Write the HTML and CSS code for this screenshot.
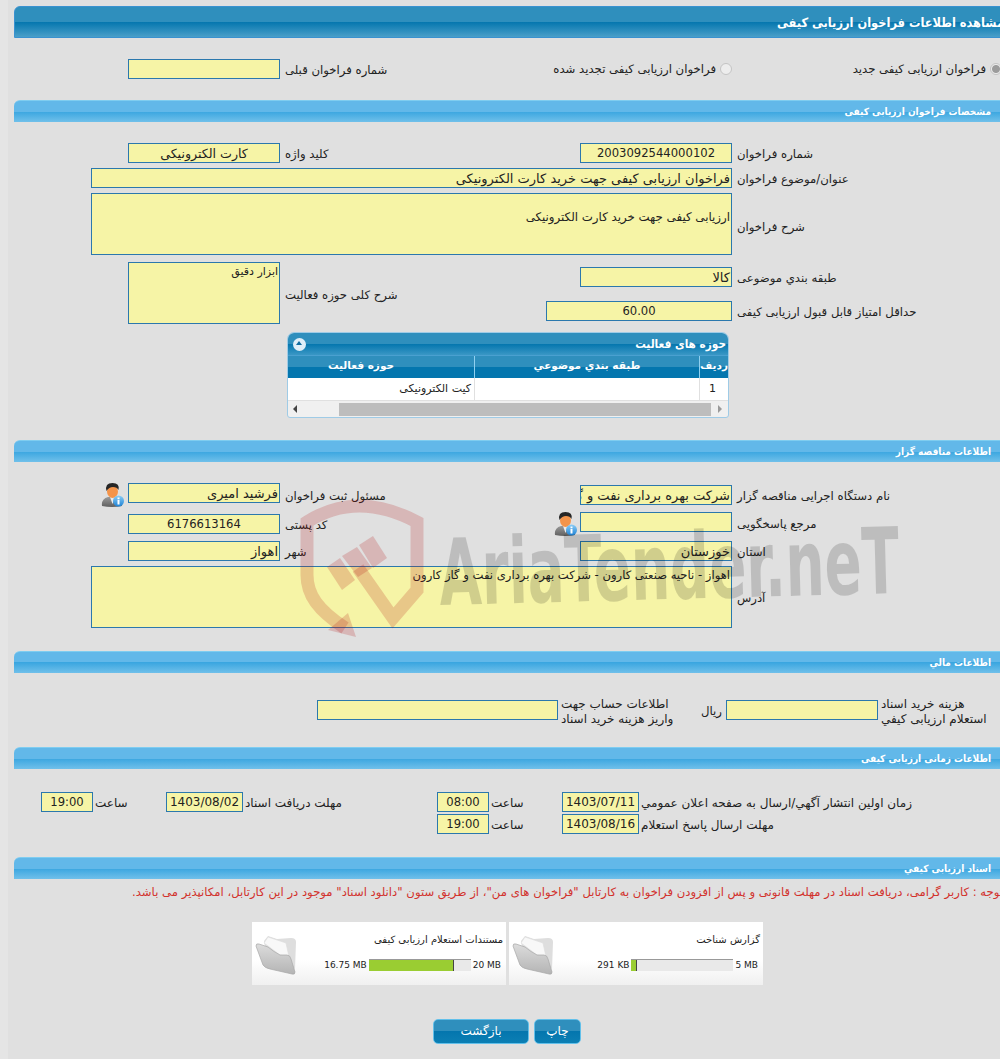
FILE: index.html
```html
<!DOCTYPE html>
<html lang="fa">
<head>
    <meta charset="UTF-8">
    <title>مشاهده اطلاعات فراخوان ارزیابی کیفی</title>
    <link rel="stylesheet" href="styles.css">
</head>
<body>
<div class="page">
    <!-- watermark -->
    <svg class="watermark" width="1000" height="700" viewBox="0 0 1000 700">
        <g fill="none" stroke="#b41414" stroke-width="13" opacity="0.2">
            <path d="M345 628 C318 610 307 595 307 575 V522 Q357 490 417 522 V590 L393 618 L358 568"/>
        </g>
        <g fill="#b41414" opacity="0.2">
            <path d="M327 567 L340 558 L355 580 L342 590 Z"/>
            <path d="M342 556 L357 547 L372 568 L358 577 Z"/>
            <path d="M359 545 L373 536 L387 558 L373 568 Z"/>
            <path d="M328 630 L348 613 L356 637 Z"/>
        </g>
        <text class="watermark-text" x="440" y="605" textLength="460" lengthAdjust="spacingAndGlyphs" transform="rotate(-1.5 440 605)">AriaTender.neT</text>
    </svg>

    <div class="main-bar"><span>مشاهده اطلاعات فراخوان ارزیابی کیفی</span></div>

    <div class="radio-row">
        <div class="field c-prev"></div>
        <div class="label">شماره فراخوان قبلی</div>
        <div class="radio-cell renewed">
            <span class="radio"></span>
            <span>فراخوان ارزیابی کیفی تجدید شده</span>
        </div>
        <div class="radio-cell fresh">
            <span class="radio checked"></span>
            <span>فراخوان ارزیابی کیفی جدید</span>
        </div>
    </div>

    <!-- مشخصات -->
    <div class="section-bar first-section">مشخصات فراخوان ارزیابی کیفی</div>
    <div class="form-grid rows-spec">
        <div class="field center keyword c-left">کارت الکترونیکی</div>
        <div class="label">کلید واژه</div>
        <div class="field center num c-right">2003092544000102</div>
        <div class="label">شماره فراخوان</div>

        <div class="field wide big-text">فراخوان ارزیابی کیفی جهت خرید کارت الکترونیکی</div>
        <div class="label">عنوان/موضوع فراخوان</div>

        <div class="field wide area desc">ارزیابی کیفی جهت خرید کارت الکترونیکی</div>
        <div class="label desc-label">شرح فراخوان</div>
    </div>

    <div class="activity">
        <div class="activity-left">
            <div class="field area activity-text">ابزار دقیق</div>
            <div class="label">شرح کلی حوزه فعالیت</div>
        </div>
        <div class="activity-right">
            <div class="activity-row">
                <div class="field big-text">کالا</div>
                <div class="label">طبقه بندي موضوعی</div>
            </div>
            <div class="activity-row score">
                <div class="field center num score-field">60.00</div>
                <div class="label">حداقل امتیاز قابل قبول ارزیابی کیفی</div>
            </div>
        </div>
    </div>

    <div class="grid-box">
        <div class="grid-title">
            <span>حوزه های فعالیت</span>
            <span class="collapse"></span>
        </div>
        <div class="grid-head">
            <div class="col-a">حوزه فعالیت</div>
            <div class="col-b">طبقه بندي موضوعي</div>
            <div class="col-c">ردیف</div>
        </div>
        <div class="grid-data">
            <div class="col-a">کیت الکترونیکی</div>
            <div class="col-b"></div>
            <div class="col-c">1</div>
        </div>
        <div class="grid-scroll">
            <span class="arrow left"></span>
            <span class="thumb"></span>
            <span class="arrow right"></span>
        </div>
    </div>

    <!-- مناقصه گزار -->
    <div class="section-bar org-section">اطلاعات مناقصه گزار</div>
    <div class="org">
        <div class="org-row">
            <svg class="person" width="24" height="24" viewBox="0 0 24 24"><use href="#person"/></svg>
            <div class="field big-text f-left">فرشید امیری</div>
            <div class="label l-left down2">مسئول ثبت فراخوان</div>
            <div class="field big-text f-right down2">شرکت بهره برداری نفت و گاز کارون</div>
            <div class="label down2">نام دستگاه اجرایی مناقصه گزار</div>
        </div>
        <div class="org-row">
            <div class="field center num f-left push down2">6176613164</div>
            <div class="label l-left person-gap down2">کد پستی</div>
            <svg class="person person-right" width="24" height="24" viewBox="0 0 24 24"><use href="#person"/></svg>
            <div class="field f-right"></div>
            <div class="label down1">مرجع پاسخگویی</div>
        </div>
        <div class="org-row third">
            <div class="field big-text f-left push">اهواز</div>
            <div class="label l-left">شهر</div>
            <div class="field big-text f-right">خوزستان</div>
            <div class="label">استان</div>
        </div>
        <div class="address-row">
            <div class="field area address">اهواز - ناحیه صنعتی کارون - شرکت بهره برداری نفت و گاز کارون</div>
            <div class="label">آدرس</div>
        </div>
    </div>

    <!-- مالی -->
    <div class="section-bar finance-section">اطلاعات مالي</div>
    <div class="finance">
        <div class="field account"></div>
        <div class="label two-line account-label">اطلاعات حساب جهت<br>واریز هزینه خرید اسناد</div>
        <div class="label rial">ریال</div>
        <div class="field cost"></div>
        <div class="label two-line">هزینه خرید اسناد<br>استعلام ارزیابی کیفي</div>
    </div>

    <!-- زمان -->
    <div class="section-bar time-section">اطلاعات زمانی ارزیابی کیفی</div>
    <div class="dates">
        <div class="field center num time">19:00</div>
        <div class="label l-hour">ساعت</div>
        <div class="field center date">1403/08/02</div>
        <div class="label l-d2">مهلت دریافت اسناد</div>
        <div class="field center num time">08:00</div>
        <div class="label l-hour">ساعت</div>
        <div class="field center date">1403/07/11</div>
        <div class="label">زمان اولین انتشار آگهي/ارسال به صفحه اعلان عمومي</div>
    </div>
    <div class="dates second-date">
        <div class="field center num time">19:00</div>
        <div class="label l-hour">ساعت</div>
        <div class="field center date">1403/08/16</div>
        <div class="label">مهلت ارسال پاسخ استعلام</div>
    </div>

    <!-- اسناد -->
    <div class="section-bar docs-section">اسناد ارزیابی کیفي</div>
    <div class="note">توجه : کاربر گرامی، دریافت اسناد در مهلت قانونی و پس از افزودن فراخوان به کارتابل "فراخوان های من"، از طریق ستون "دانلود اسناد" موجود در این کارتابل، امکانپذیر می باشد.</div>

    <div class="cards">
        <div class="card">
            <svg class="folder" width="44" height="40" viewBox="0 0 44 40"><use href="#folder"/></svg>
            <div class="card-body">
                <div class="card-title">مستندات استعلام ارزیابی کیفی</div>
                <div class="usage">
                    <span>16.75 MB</span>
                    <div class="bar"><div class="bar-fill" style="width: 83.75%"></div></div>
                    <span>20 MB</span>
                </div>
            </div>
        </div>
        <div class="card">
            <svg class="folder" width="44" height="40" viewBox="0 0 44 40"><use href="#folder"/></svg>
            <div class="card-body">
                <div class="card-title">گزارش شناخت</div>
                <div class="usage">
                    <span>291 KB</span>
                    <div class="bar"><div class="bar-fill" style="width: 5.7%"></div></div>
                    <span>5 MB</span>
                </div>
            </div>
        </div>
    </div>

    <div class="buttons">
        <button class="btn back">بازگشت</button>
        <button class="btn print">چاپ</button>
    </div>

    <!-- icons -->
    <svg width="0" height="0" class="defs">
        <defs>
            <linearGradient id="suit" x1="0" y1="0" x2="0" y2="1"><stop offset="0" stop-color="#9a9a9a"/><stop offset="1" stop-color="#5f5f5f"/></linearGradient>
            <linearGradient id="info" x1="0" y1="0" x2="0" y2="1"><stop offset="0" stop-color="#8ccdf5"/><stop offset="1" stop-color="#1e83d6"/></linearGradient>
            <linearGradient id="fold" x1="0" y1="0" x2="0" y2="1"><stop offset="0" stop-color="#dcdcdc"/><stop offset="1" stop-color="#b4b4b4"/></linearGradient>
            <symbol id="person" viewBox="0 0 24 24">
                <path d="M1 23 Q0 16 7 14 L16 14 Q21 16 21 23 Q11 25 1 23 Z" fill="url(#suit)"/>
                <path d="M9 14 L11.5 21 L14 14 Z" fill="#ececec"/>
                <ellipse cx="11.5" cy="8.5" rx="5.5" ry="6.5" fill="#f4944a"/>
                <path d="M5.5 8 Q3.5 0 11.5 0 Q19 0 17.5 7 Q16 4 12 4 Q8 4 5.5 8 Z" fill="#262626"/>
                <circle cx="17.5" cy="18" r="5.5" fill="url(#info)"/>
                <rect x="16.5" y="17" width="2" height="4.5" fill="#fff"/>
                <rect x="16.5" y="14.5" width="2" height="1.8" fill="#fff"/>
            </symbol>
            <symbol id="folder" viewBox="0 0 44 40">
                <path d="M9 6 L13 1 L22 4 L36 3 Q41 3 41 7 L40 34 L25 20 L10 12 Z" fill="#dedede"/>
                <path d="M9 8 L13 2 L31 8 L34 22 L25 20 Z" fill="#f8f8f8" stroke="#dcdcdc" stroke-width="0.6"/>
                <path d="M1 11 Q1 8 4 9 L13 12 Q19 17 25 20 L32 20 Q35 20 36 24 L40 37 Q40 40 37 39 L15 34 Q10 33 8 30 Z" fill="url(#fold)" stroke="#a8a8a8" stroke-width="0.7"/>
            </symbol>
        </defs>
    </svg>
</div>
</body>
</html>
```
FILE: styles.css
```css
* {
    box-sizing: border-box;
}

body {
    margin: 0;
    background-color: #e0e0e0;
    font-family: "DejaVu Sans", "Liberation Sans", sans-serif;
    font-size: 12px;
    color: #222;
}

.page {
    position: relative;
    width: 1000px;
    height: 1059px;
    padding-top: 6px;
    overflow: hidden;
    background: linear-gradient(90deg, #e5e5e5 8px, #e0e0e0 8px);
}

.defs {
    position: absolute;
}

/* watermark */
.watermark {
    position: absolute;
    top: 0;
    left: 0;
    z-index: 5;
    pointer-events: none;
}

.watermark-text {
    font-family: "DejaVu Sans Condensed", "DejaVu Sans", sans-serif;
    font-weight: bold;
    font-size: 92px;
    fill: #000;
    opacity: 0.15;
}

/* bars */
.main-bar {
    display: flex;
    align-items: center;
    justify-content: flex-end;
    height: 32px;
    margin-left: 14px;
    margin-right: -5px;
    border: 1px solid #3a92d0;
    border-radius: 6px 0 0 0;
    background: linear-gradient(#2f8fbd 0, #2f8fbd 50%, #0476ae 50%, #4a9fc9 100%);
    color: #fff;
    font-family: "DejaVu Sans Condensed", "DejaVu Sans", sans-serif;
    font-size: 12.7px;
    font-weight: bold;
}

.section-bar {
    height: 22px;
    line-height: 22px;
    margin-left: 14px;
    padding-right: 9px;
    border-radius: 6px 0 0 0;
    border-top: 1px solid #7fcdf0;
    background: linear-gradient(#62b8e9 0, #62b8e9 50%, #3aa6e0 50%, #70c0ea 100%);
    color: #fff;
    font-family: "DejaVu Sans Condensed", "DejaVu Sans", sans-serif;
    font-size: 10px;
    font-weight: bold;
    text-align: right;
}

.first-section { margin-top: 21px; }
.org-section { margin-top: 22px; }
.finance-section { margin-top: 23px; }
.time-section { margin-top: 17px; }
.docs-section { margin-top: 23px; }

/* fields */
.field {
    height: 20px;
    border: 1px solid #2b78ad;
    background-color: #f6f4a6;
    color: #222;
    direction: rtl;
    text-align: right;
    white-space: nowrap;
    overflow: hidden;
    padding: 0 1px;
    line-height: 18px;
    font-size: 12px;
}

.center { text-align: center; }
.num { font-size: 11.6px; }
.keyword { font-size: 12.6px; line-height: 19px; }
.big-text { font-size: 13px; line-height: 19px; }

.area {
    height: 62px;
    white-space: normal;
}

.label {
    height: 20px;
    padding-left: 5px;
    font-size: 11.7px;
    line-height: 22px;
    white-space: nowrap;
    direction: rtl;
    text-align: left;
    color: #222;
}

.form-grid {
    display: grid;
    grid-template-columns: 91px 37px 152px 300px 152px 1fr;
    row-gap: 5px;
    align-items: center;
}

.c-left { grid-column: 3; }
.c-right { grid-column: 5; }
.wide { grid-column: 2 / 6; }
.desc-label { margin-top: 4px; }

/* radio row */
.radio-row {
    display: grid;
    grid-template-columns: 128px 152px 271px 181px 268px;
    align-items: center;
    height: 20px;
    margin-top: 21px;
}

.c-prev { grid-column: 2; }

.radio-cell {
    display: flex;
    align-items: center;
    gap: 4px;
    direction: rtl;
    white-space: nowrap;
    font-size: 11.7px;
}

.renewed { justify-self: end; }
.fresh { margin-right: -2px; }

.radio {
    display: block;
    flex: none;
    width: 12px;
    height: 12px;
    margin-bottom: 1px;
    border: 1px solid #c4c4c4;
    border-radius: 50%;
    background-color: #ededed;
}

.radio.checked {
    background: radial-gradient(circle, #9c9c9c 0, #9c9c9c 3.5px, #ededed 4.5px);
}

.rows-spec {
    margin-top: 21px;
}

.desc {
    padding-top: 14px;
    line-height: 18px;
    font-size: 11.8px;
}

/* activity */
.activity {
    display: flex;
    margin-top: 7px;
    height: 62px;
}

.activity-left {
    display: flex;
    align-items: center;
    width: 580px;
    padding-left: 128px;
}

.activity-text {
    width: 152px;
    flex: none;
    padding-top: 1px;
    line-height: 16px;
    font-size: 11px;
}

.activity-left .label { margin-top: 2px; }

.activity-right { padding-top: 5px; }

.activity-row {
    display: flex;
    align-items: center;
}

.activity-row .field { width: 152px; }

.activity-row.score {
    margin-top: 14px;
    margin-left: -34px;
}

.activity-row .score-field { width: 186px; }

/* grid */
.grid-box {
    width: 442px;
    height: 86px;
    margin: 8px 0 0 287px;
    border: 1px solid #9fcbe6;
    border-radius: 7px 7px 3px 3px;
    overflow: hidden;
    background-color: #f0f0f0;
}

.grid-title {
    display: flex;
    justify-content: space-between;
    align-items: center;
    direction: rtl;
    height: 22px;
    padding: 0 2px 0 5px;
    background: linear-gradient(#2f8fbd 0, #2f8fbd 50%, #0476ae 50%, #3a97c5 100%);
    color: #fff;
    font-family: "DejaVu Sans Condensed", "DejaVu Sans", sans-serif;
    font-size: 11.7px;
    font-weight: bold;
}

.collapse {
    position: relative;
    width: 13px;
    height: 13px;
    border-radius: 50%;
    background-color: #dfeef8;
}

.collapse::after {
    content: "";
    position: absolute;
    top: 3px;
    left: 3px;
    border-left: 3.5px solid transparent;
    border-right: 3.5px solid transparent;
    border-bottom: 4px solid #0f6b9f;
}

.grid-head,
.grid-data {
    display: flex;
}

.col-a { width: 186px; flex: none; }
.col-b { width: 225px; flex: none; }
.col-c { flex: 1; }

.grid-head {
    height: 23px;
    border-top: 1px solid #4aa0d0;
    background: linear-gradient(#2f8fbd 0, #2f8fbd 50%, #0476ae 50%, #0476ae 100%);
    color: #fff;
    font-size: 10.5px;
    font-weight: bold;
    text-align: center;
    line-height: 18px;
}

.grid-head > div {
    border-left: 1px solid #8fd0f0;
    direction: rtl;
    white-space: nowrap;
}

.grid-head > div:first-child {
    border-left: 0;
    padding-right: 40px;
}

.grid-data {
    height: 23px;
    border-bottom: 1px solid #e0e0e0;
    background-color: #fff;
    font-size: 11px;
    line-height: 22px;
}

.grid-data > div {
    border-left: 1px solid #e0e0e0;
    direction: rtl;
    padding-right: 3px;
}

.grid-data > div:first-child { border-left: 0; }
.grid-data .col-c { text-align: center; }

.grid-scroll {
    position: relative;
    display: flex;
    align-items: center;
    height: 16px;
}

.thumb {
    width: 372px;
    height: 13px;
    margin-left: 51px;
    background-color: #bdbdbd;
}

.arrow {
    position: absolute;
    top: 4px;
    border-top: 4px solid transparent;
    border-bottom: 4px solid transparent;
}

.arrow.left {
    left: 5px;
    border-right: 4px solid #444;
}

.arrow.right {
    right: 6px;
    border-left: 4px solid #9a9a9a;
}

/* org */
.org {
    padding-top: 21px;
}

.org-row {
    display: flex;
    align-items: flex-start;
    height: 29px;
}

.org-row.third { height: 25px; }

.person {
    flex: none;
    margin: 0 3px 0 101px;
}

.push { margin-left: 128px; }
.f-left { width: 152px; flex: none; }
.f-right { width: 152px; flex: none; }
.l-left { width: 300px; flex: none; }
.org-row .person-gap { width: 274px; }
.person-right { margin: 0 2px 0 0; }
.down1 { margin-top: 1px; }
.down2 { margin-top: 2px; }

.address-row {
    display: flex;
    align-items: center;
    padding-left: 91px;
}

.address {
    width: 641px;
    flex: none;
    line-height: 17px;
    font-size: 11.6px;
}

/* finance */
.finance {
    display: flex;
    align-items: center;
    height: 40px;
    margin-top: 17px;
    padding-left: 317px;
}

.account { width: 241px; flex: none; }

.finance .two-line {
    height: auto;
    padding: 4px 0 0 3px;
    font-size: 12px;
    line-height: 15px;
}

.finance .account-label { width: 135px; flex: none; }

.finance .rial {
    width: 33px;
    flex: none;
    padding: 0 4px 0 0;
    text-align: right;
}

.cost { width: 152px; flex: none; }

/* dates */
.dates {
    display: flex;
    align-items: center;
    margin-top: 23px;
    padding-left: 41px;
}

.second-date {
    margin-top: 2px;
    padding-left: 437px;
}

.time { width: 52px; flex: none; }
.date { width: 77px; flex: none; }

.dates .label {
    padding-left: 2px;
    font-size: 12px;
}

.dates .l-hour { width: 73px; flex: none; }
.dates .l-d2 { width: 194px; flex: none; }

/* note */
.note {
    height: 16px;
    margin-top: 5px;
    margin-right: -3px;
    direction: rtl;
    color: #d2322d;
    font-size: 11.65px;
    line-height: 16px;
    white-space: nowrap;
}

/* cards */
.cards {
    display: flex;
    gap: 3px;
    margin: 22px 0 0 252px;
}

.card {
    display: flex;
    align-items: flex-start;
    width: 254px;
    height: 63px;
    padding: 0 3px;
    background: linear-gradient(#fff 0, #fff 60%, #f0f0f0 100%);
}

.card-body {
    flex: 1;
    padding-top: 10px;
    direction: rtl;
}

.folder { flex: none; margin-top: 13px; }

.card-title {
    font-size: 10px;
    line-height: 16px;
}

.usage {
    display: flex;
    direction: ltr;
    align-items: center;
    justify-content: flex-end;
    gap: 2px;
    margin-top: 11px;
    padding-right: 2px;
    font-size: 9px;
    white-space: nowrap;
}

.bar {
    width: 102px;
    height: 12px;
    border-top: 1px solid #999;
    background-color: #e9e9e9;
}

.bar-fill {
    height: 11px;
    border-right: 1px solid #444;
    background-color: #9acd32;
}

/* buttons */
.buttons {
    display: flex;
    gap: 5px;
    margin: 34px 0 0 433px;
}

.btn {
    height: 25px;
    padding: 0 0 2px;
    border: 1px solid #62c0ea;
    border-radius: 5px;
    background: linear-gradient(#2f8fbd 0, #2f8fbd 50%, #0476ae 50%, #0c7fb4 100%);
    color: #fff;
    font-family: "DejaVu Sans", sans-serif;
    font-size: 12px;
}

.back { width: 96px; }
.print { width: 47px; }
```
